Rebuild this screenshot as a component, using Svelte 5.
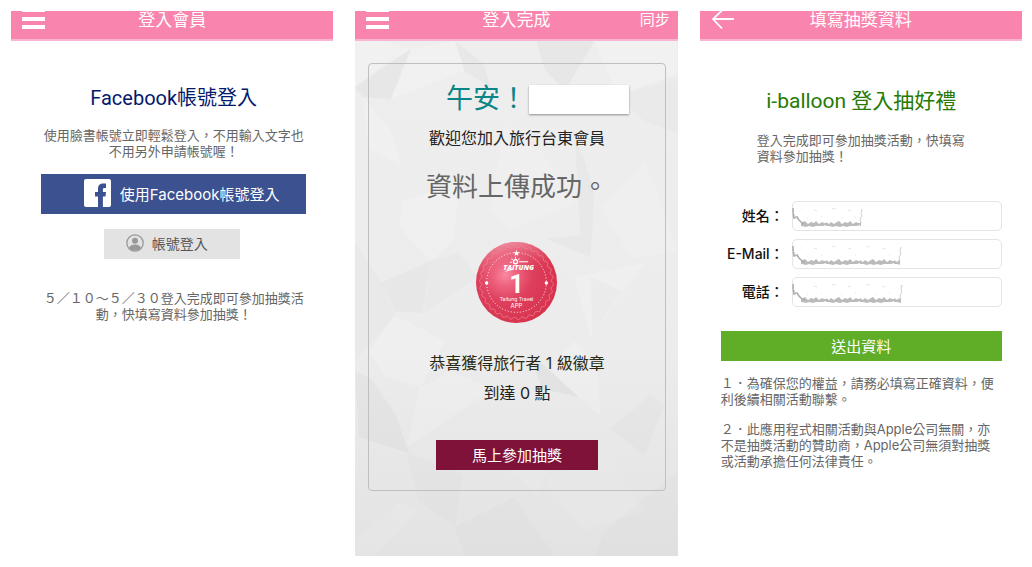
<script>
	let name = $state('');
	let email = $state('');
	let phone = $state('');

	// wavy ring along the rim of the badge
	const wave = Array.from({ length: 361 }, (_, i) => {
		const a = (i * Math.PI) / 180;
		const r = 35.5 + 1.1 * Math.sin(a * 30);
		return `${i ? 'L' : 'M'}${(40 + r * Math.cos(a)).toFixed(2)} ${(40 + r * Math.sin(a)).toFixed(2)}`;
	}).join('');

	const facets = [
		{ points: '0,46 22,28 56,8 32,0 0,0', tone: '#fff', o: 0.4 },
		{ points: '0,46 56,8 36,58 8,56', tone: '#888', o: 0.12 },
		{ points: '56,8 100,0 110,30 36,58', tone: '#fff', o: 0.35 },
		{ points: '100,0 128,22 136,46 110,30', tone: '#888', o: 0.1 },
		{ points: '182,0 240,0 210,50 190,28', tone: '#888', o: 0.12 },
		{ points: '240,0 323,0 323,40 262,54', tone: '#fff', o: 0.35 },
		{ points: '262,54 323,34 323,92 290,80', tone: '#888', o: 0.07 },
		{ points: '8,56 36,90 46,124 14,108', tone: '#fff', o: 0.35 },
		{ points: '150,84 186,110 220,162 154,190 136,168', tone: '#fff', o: 0.3 },
		{ points: '106,140 98,200 76,220 44,186 48,160', tone: '#fff', o: 0.35 },
		{ points: '220,90 240,150 236,216 192,198 226,194', tone: '#888', o: 0.08 },
		{ points: '246,168 290,122 310,170 323,210 278,218', tone: '#fff', o: 0.3 },
		{ points: '26,242 76,220 68,272 40,270', tone: '#888', o: 0.08 },
		{ points: '76,220 104,212 122,236 70,272', tone: '#888', o: 0.05 },
		{ points: '220,236 290,222 236,296', tone: '#fff', o: 0.35 },
		{ points: '236,236 268,250 238,292', tone: '#888', o: 0.06 },
		{ points: '0,200 26,242 40,274 0,320', tone: '#888', o: 0.05 },
		{ points: '14,310 40,274 90,300 66,346 30,336', tone: '#fff', o: 0.3 },
		{ points: '0,330 16,338 40,372 54,412 4,396', tone: '#888', o: 0.1 },
		{ points: '64,348 96,330 138,348 52,406', tone: '#fff', o: 0.3 },
		{ points: '174,312 194,328 224,356 188,348', tone: '#888', o: 0.14 },
		{ points: '220,300 242,324 246,374 224,356 194,328', tone: '#fff', o: 0.35 },
		{ points: '256,388 296,354 310,364 290,414', tone: '#888', o: 0.07 },
		{ points: '164,406 202,408 182,454 160,430', tone: '#fff', o: 0.22 },
		{ points: '52,412 108,434 100,486 64,460', tone: '#888', o: 0.05 },
		{ points: '0,500 44,462 64,470 20,515 0,515', tone: '#fff', o: 0.2 },
		{ points: '190,440 250,410 290,470 230,490', tone: '#fff', o: 0.15 },
		{ points: '100,486 160,456 200,515 110,515', tone: '#888', o: 0.04 },
		{ points: '250,490 323,430 323,515 240,515', tone: '#888', o: 0.04 },
	];
</script>

{#snippet menu()}
	<button class="icon-btn" aria-label="選單">
		<svg width="24" height="20" viewBox="0 0 24 20">
			<path d="M0 0h23v1H0zM0 6h23v4H0zM0 14h23v4H0z" fill="#fff" />
		</svg>
	</button>
{/snippet}

{#snippet smudge(w)}
	<svg class="smudge" width={w} height="22" viewBox="0 0 {w} 22" aria-hidden="true">
		<defs>
			<pattern id="torn{w}" width="34" height="22" patternUnits="userSpaceOnUse">
				<path d="M0 14l3 2 2-2 3 2 3-2 2-1 3 3 3-2 3 1 2-2 3 3 3-2 2 1 2 0v2l-3 1-3 0-4 0-3 1-4-1-3 1-4-1-3 1-4-1-3 0z" fill="#aaa" opacity=".8" />
				<path d="M6 1l4-1M22 2l3 1M15 10h1M29 9h1" stroke="#ddd" stroke-width=".8" />
			</pattern>
		</defs>
		<path d="M1 0c0 4 0 6 1 10l3-1 2 3 3 3 2 1" fill="none" stroke="#aaa" stroke-width="1.5" />
		<path d="M1 5l2 2M2 8l3 2" stroke="#ccc" />
		<rect x="9" width={w - 11} height="22" fill="url(#torn{w})" />
		<path d="M{w - 1} 1l-1 4 1 3-2 3 1 4" fill="none" stroke="#ccc" stroke-width=".9" />
	</svg>
{/snippet}

<main lang="zh-Hant">
	<section class="screen">
		<header class="bar">
			{@render menu()}
			<h1>登入會員</h1>
			<span></span>
		</header>
		<div class="login">
			<h2>Facebook帳號登入</h2>
			<p>使用臉書帳號立即輕鬆登入，不用輸入文字也不用另外申請帳號喔！</p>
			<button class="facebook">
				<svg width="27" height="28" viewBox="0 0 27 28">
					<rect width="27" height="28" rx="2" fill="#fff" />
					<path d="M14 28V17.500h-3V13h3V10C14 6.200 16 4.500 19.300 4.500H22V9h-1.500c-1.300 0-1.600.6-1.600 1.700V13H22l-.5 4.500h-2.600V28z" fill="#3b5190" />
				</svg>
				使用Facebook帳號登入
			</button>
			<button class="account">
				<svg width="18" height="18" viewBox="0 0 18 18">
					<circle cx="9" cy="9" r="8.200" fill="none" stroke="#999" stroke-width="1.300" />
					<circle cx="9" cy="6.800" r="3" fill="#999" />
					<path d="M3 14c.8-2.500 3-3.600 6-3.600s5.200 1.100 6 3.600c-1.500 1.700-3.500 2.600-6 2.600S4.500 15.700 3 14z" fill="#999" />
				</svg>
				帳號登入
			</button>
			<p class="period">５／１０～５／３０登入完成即可參加抽獎活動，快填寫資料參加抽獎！</p>
		</div>
	</section>

	<section class="screen">
		<header class="bar">
			{@render menu()}
			<h1>登入完成</h1>
			<button class="icon-btn sync">同步</button>
		</header>
		<div class="done">
			<svg class="facets" viewBox="0 0 323 515" preserveAspectRatio="none" aria-hidden="true">
				{#each facets as f}
					<polygon points={f.points} fill={f.tone} opacity={f.o} />
				{/each}
			</svg>
			<div class="card">
				<div class="greeting">
					<h2>午安！</h2>
					<span class="user"></span>
				</div>
				<p class="welcome">歡迎您加入旅行台東會員</p>
				<p class="uploaded">資料上傳成功。</p>
				<svg class="badge" width="81" height="81" viewBox="0 0 80 80">
					<defs>
						<radialGradient id="ball" cx=".36" cy=".4" r=".68">
							<stop offset="0" stop-color="#f78ba2" />
							<stop offset=".2" stop-color="#ef6480" />
							<stop offset=".5" stop-color="#dd3f5c" />
							<stop offset="1" stop-color="#d7324c" />
						</radialGradient>
						<linearGradient id="shine" x1=".3" y1="0" x2=".5" y2="1">
							<stop offset="0" stop-color="#f7a9b9" stop-opacity=".8" />
							<stop offset=".4" stop-color="#e8506c" stop-opacity="0" />
						</linearGradient>
					</defs>
					<circle cx="40" cy="40" r="40" fill="url(#ball)" />
					<circle cx="40" cy="40" r="40" fill="url(#shine)" />
					<path d={wave} fill="none" stroke="#f08a9c" stroke-width=".7" />
					<circle cx="40" cy="40" r="29.500" fill="none" stroke="#fff" stroke-width=".9" stroke-dasharray="1 2" />
					<path d="M40 8l.9 2 2.100.2-1.600 1.400.5 2.100-1.900-1.100-1.900 1.100.5-2.100L37 10.200l2.100-.2z" fill="#fff" />
					<circle cx="10.500" cy="40.500" r="1.700" fill="#fff" />
					<circle cx="69.500" cy="40.500" r="1.700" fill="#fff" />
					<circle cx="39" cy="19.500" r="2" fill="none" stroke="#fff" stroke-width="1.300" />
					<path d="M39 14.500v2M35 16.500l1.300 1M43 16.500l-1.300 1M33.500 20h2M42.500 19.500h9M36 27l-7 2" stroke="#fff" />
					<text class="brand" x="27" y="28" font-size="7">TAITUNG</text>
					<text class="level" x="40" y="50" font-size="25">1</text>
					<text class="label" x="40" y="58" font-size="5">Taitung Travel</text>
					<text class="label" x="40" y="65" font-size="6">APP</text>
				</svg>
				<p class="earned">恭喜獲得旅行者 1 級徽章</p>
				<p class="points">到達 0 點</p>
				<button class="join">馬上參加抽獎</button>
			</div>
		</div>
	</section>

	<section class="screen">
		<header class="bar">
			<button class="icon-btn" aria-label="返回">
				<svg width="24" height="20" viewBox="0 0 24 20">
					<path d="M12 -1.500L2 8L11 17.500M2 8H23" fill="none" stroke="#fff" stroke-width="1.800" />
				</svg>
			</button>
			<h1>填寫抽獎資料</h1>
			<span></span>
		</header>
		<div class="lottery">
			<h2>i-balloon 登入抽好禮</h2>
			<p class="intro">登入完成即可參加抽獎活動，快填寫資料參加抽獎！</p>
			<form onsubmit={(e) => e.preventDefault()}>
				<div class="row">
					<label for="name">姓名：</label>
					<div class="field">
						<input id="name" type="text" bind:value={name} />
						{@render smudge(71)}
					</div>
				</div>
				<div class="row">
					<label for="email">E-Mail：</label>
					<div class="field">
						<input id="email" type="email" bind:value={email} />
						{@render smudge(110)}
					</div>
				</div>
				<div class="row">
					<label for="phone">電話：</label>
					<div class="field">
						<input id="phone" type="tel" bind:value={phone} />
						{@render smudge(111)}
					</div>
				</div>
				<button class="submit">送出資料</button>
			</form>
			<p class="note">１．為確保您的權益，請務必填寫正確資料，便利後續相關活動聯繫。</p>
			<p class="note">２．此應用程式相關活動與Apple公司無關，亦不是抽獎活動的贊助商，Apple公司無須對抽獎或活動承擔任何法律責任。</p>
		</div>
	</section>
</main>

<style>
	:global(body) {
		margin: 0;
		background: #fff;
	}

	main {
		display: grid;
		grid-template-columns: repeat(3, 1fr);
		gap: 22px;
		padding: 11px 10px 11px 11px;
		font-family: Inter, 'Noto Sans CJK TC', sans-serif;
		font-size: 13px;
		line-height: 16px;
		color: #666;
	}

	h1,
	h2,
	p {
		margin: 0;
		font-weight: 400;
	}

	h2 {
		font-family: Roboto, 'Noto Sans CJK TC', sans-serif;
	}

	button {
		border: 0;
		padding: 0 0 2px;
		font-family: inherit;
		font-size: 15px;
		color: #fff;
		cursor: pointer;
	}

	/* Top bar */
	.bar {
		display: grid;
		grid-template-columns: 56px 1fr 56px;
		align-items: start;
		height: 28px;
		overflow: hidden;
		background: #f984ad;
		border-bottom: 2px solid #fbb4d3;
	}

	.bar h1 {
		font-size: 17px;
		line-height: 18px;
		text-align: center;
		color: #fff;
	}

	.icon-btn {
		display: flex;
		padding: 0 0 0 11px;
		background: none;
		line-height: 18px;
	}

	.sync {
		padding: 0 8px 0 0;
		justify-content: flex-end;
	}

	/* Login */
	.login {
		display: flex;
		flex-direction: column;
		padding: 43px 27px 0 30px;
		text-align: center;
	}

	.login h2 {
		font-size: 20px;
		line-height: 28px;
		color: #04196b;
		margin-bottom: 15px;
	}

	.facebook,
	.account {
		display: flex;
		align-items: center;
		justify-content: center;
	}

	.facebook {
		gap: 9px;
		height: 40px;
		margin: 15px 0;
		padding-left: 16px;
		background: #3b5190;
	}

	.account {
		gap: 8px;
		align-self: center;
		width: 136px;
		height: 30px;
		margin-right: 4px;
		padding-right: 10px;
		background: #e3e3e3;
		font-size: 14px;
		color: #555;
	}

	.period {
		margin-top: 31px;
	}

	/* Finished */
	.done {
		display: grid;
		background: linear-gradient(#eeeeee 0%, #ececec 60%, #e3e3e3 100%);
	}

	.facets,
	.card {
		grid-area: 1 / 1;
	}

	.facets {
		width: 100%;
		height: 100%;
		opacity: 0.5;
	}

	.card {
		display: flex;
		flex-direction: column;
		align-items: center;
		margin: 22px 12px 65px 13px;
		padding: 19px 0 20px;
		border: 1px solid #bfbfbf;
		border-radius: 4px;
		z-index: 1;
	}

	.greeting {
		display: flex;
		align-items: center;
		gap: 2px;
		padding-left: 40px;
		width: 182px;
	}

	.greeting h2 {
		flex: none;
		font-size: 27px;
		line-height: 32px;
		color: #0b8585;
	}

	.user {
		flex: none;
		width: 100px;
		height: 29px;
		background: #fff;
		box-shadow: 0 1px 2px rgba(0, 0, 0, 0.4);
	}

	.welcome,
	.earned,
	.points {
		font-size: 16px;
		line-height: 24px;
		color: #222;
	}

	.welcome {
		margin-top: 11px;
	}

	.uploaded {
		margin: 19px 0 37px;
		font-size: 26px;
		line-height: 36px;
	}

	.badge text {
		fill: #fff;
	}

	.brand {
		font-family: 'Open Sans', sans-serif;
		font-style: italic;
		font-weight: 800;
	}

	.level,
	.label {
		text-anchor: middle;
	}

	.level {
		font-family: Roboto, sans-serif;
		font-weight: 700;
	}

	.earned {
		margin: 28px 0 6px;
		color: #2b2b14;
	}

	.join {
		width: 162px;
		height: 30px;
		margin-top: 35px;
		background: #7f1239;
	}

	/* Lottery form */
	.lottery {
		padding: 46px 20px 0 21px;
	}

	.lottery h2 {
		font-size: 21px;
		line-height: 28px;
		text-align: center;
		color: #267a04;
	}

	.intro {
		margin: 17px 36px 37px;
	}

	form {
		display: flex;
		flex-direction: column;
		gap: 8px;
	}

	.row {
		display: grid;
		grid-template-columns: 63px 1fr;
		align-items: center;
		gap: 8px;
	}

	label {
		font-size: 14px;
		font-weight: 500;
		text-align: right;
		white-space: nowrap;
		color: #111;
	}

	.field {
		display: flex;
		position: relative;
	}

	input {
		box-sizing: border-box;
		width: 100%;
		height: 30px;
		padding: 0 8px;
		border: 1px solid #e4e4e4;
		border-radius: 5px;
		background: #fff;
		font-family: inherit;
		font-size: 14px;
	}

	.smudge {
		position: absolute;
		left: 0;
		top: 7px;
		pointer-events: none;
	}

	.submit {
		height: 30px;
		margin-top: 16px;
		background: #60ad27;
	}

	.note {
		margin-top: 14px;
	}
</style>
